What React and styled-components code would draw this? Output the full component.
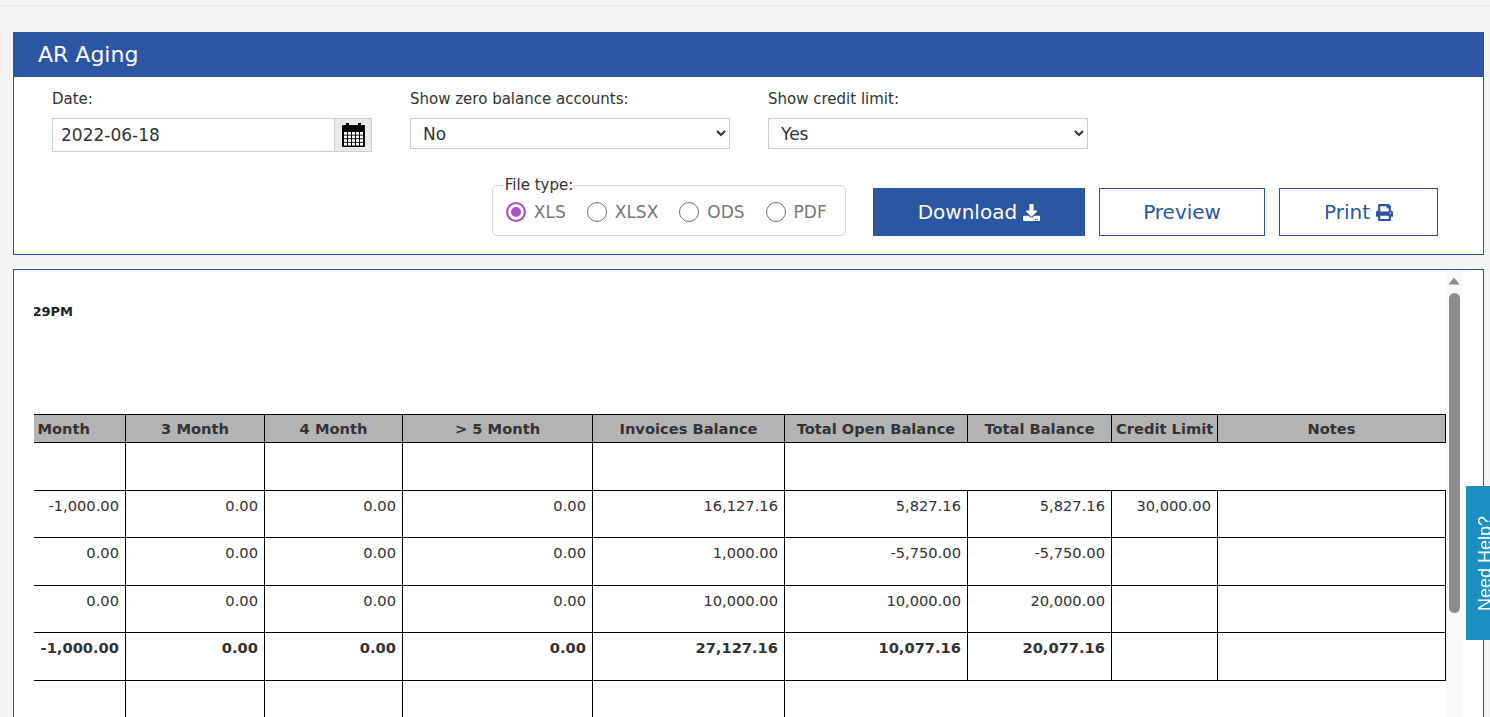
import React, { useLayoutEffect, useRef } from 'react';
import styled, { createGlobalStyle } from 'styled-components';
import { FaDownload, FaPrint } from 'react-icons/fa';

const GlobalStyle = createGlobalStyle`
  html, body { margin: 0; padding: 0; overflow: hidden; }
  body {
    background: #f4f4f4;
    font-family: "DejaVu Sans", Verdana, sans-serif;
    color: #333;
  }
  * { box-sizing: border-box; }
`;

const TopStrip = styled.div`
  height: 7px;
  border-bottom: 2px solid #e8ecf1;
`;

const Main = styled.main`
  padding: 25px 6px 0 13px;
`;

const CardTitle = styled.h1`
  margin: 0;
  height: 45px;
  line-height: 45px;
  padding-left: 25px;
  background: #2b56a3;
  color: #fff;
  font-size: 22px;
  font-weight: normal;
`;

const CardBody = styled.div`
  background: #fff;
  border: 1px solid #2b56a3;
  border-top: 0;
  padding: 13px 45px 18px 38px;
`;

const FieldRow = styled.div`
  display: grid;
  grid-template-columns: repeat(3, 320px);
  column-gap: 38px;
  align-items: start;
`;

const Field = styled.div`
  display: flex;
  flex-direction: column;
`;

const Label = styled.label`
  font-size: 15px;
  line-height: 18px;
  margin-bottom: 10px;
  color: #333;
`;

const DateGroup = styled.div`
  display: flex;
  height: 34px;
`;

const DateInput = styled.input`
  flex: 1;
  min-width: 0;
  height: 100%;
  border: 1px solid #c8cdd7;
  border-right: 0;
  padding: 0 8px;
  font-family: inherit;
  font-size: 17px;
  color: #333;
  outline: none;
`;

const Addon = styled.span`
  width: 38px;
  display: flex;
  align-items: center;
  justify-content: center;
  background: #e9e9e9;
  border: 1px solid #c8cdd7;
`;

const Select = styled.select`
  width: 100%;
  height: 31px;
  border: 1px solid #c8cdd7;
  border-radius: 0;
  background: #fff;
  padding: 0 8px;
  font-family: inherit;
  font-size: 17px;
  color: #333;
`;

const ActionRow = styled.div`
  display: flex;
  justify-content: flex-end;
  align-items: flex-end;
  gap: 14px;
  margin-top: 24px;
`;

const FileType = styled.fieldset`
  margin: 0 13px 0 0;
  padding: 4px 18px 9px 13px;
  border: 1px solid #d6d6d6;
  border-radius: 5px;
  min-width: 0;
`;

const Legend = styled.legend`
  margin-left: -2px;
  padding: 0 1px;
  font-size: 15px;
  line-height: 18px;
  color: #333;
`;

const RadioGroup = styled.div`
  display: flex;
  align-items: center;
  height: 28px;
  gap: 21px;
`;

const RadioLabel = styled.label`
  display: flex;
  align-items: center;
  gap: 8px;
  font-size: 17px;
  color: #787878;
`;

const Radio = styled.input`
  appearance: none;
  width: 20px;
  height: 20px;
  margin: 0;
  border-radius: 50%;
  border: 1.5px solid #707070;
  background: #fff;

  &:checked {
    border: 2px solid #a950c6;
    background: #a950c6;
    box-shadow: inset 0 0 0 3px #fff;
  }
`;

const ActionButton = styled.button`
  height: 48px;
  padding: 0 ${(p) => p.$pad || 44}px;
  display: inline-flex;
  align-items: center;
  justify-content: center;
  gap: 6px;
  border: 1px solid #2b56a3;
  border-radius: 0;
  background: ${(p) => (p.$primary ? '#2b56a3' : '#fff')};
  color: ${(p) => (p.$primary ? '#fff' : '#2b56a3')};
  font-family: inherit;
  font-size: 20px;
  cursor: pointer;

  svg { width: 17px; height: 17px; }
`;

const ReportPanel = styled.section`
  margin-top: 14px;
  height: 480px;
  display: flex;
  background: #fff;
  border: 1px solid #2b56a3;
  padding: 0 21px 0 20px;
`;

const Viewport = styled.div`
  flex: 1;
  min-width: 0;
  height: 100%;
  overflow: hidden;
  background: #fff;
`;

const ScrollRail = styled.div`
  width: 16px;
  height: 100%;
  background: #f8f8f8;
  display: flex;
  flex-direction: column;
  align-items: center;
`;

const RailArrow = styled.div`
  height: 15px;
  display: flex;
  align-items: flex-end;
  justify-content: center;
`;

const RailThumb = styled.div`
  margin-top: 8px;
  width: 11px;
  height: 320px;
  border-radius: 6px;
  background: #8c8c8c;
`;

const Report = styled.div`
  width: max-content;
  padding-bottom: 120px;
`;

const MetaLine = styled.div`
  width: 607px;
  padding-top: 34px;
  text-align: right;
  font-size: 13px;
  line-height: 16px;
  font-weight: bold;
  color: #222;
`;

const AgingTable = styled.table`
  margin-top: 94px;
  border-collapse: collapse;
  table-layout: fixed;
  font-size: 11pt;
  color: #333;
`;

const Th = styled.th`
  height: 28px;
  padding: 0 4px;
  background: #b3b3b3;
  border: 1px solid #000;
  font-weight: bold;
  text-align: center;
  white-space: nowrap;
  color: #333;
`;

const Row = styled.tr`
  height: 47.6px;
`;

const Td = styled.td`
  padding: 6px 6px 0;
  border: 1px solid #000;
  vertical-align: top;
  text-align: ${(p) => (p.$left ? 'left' : 'right')};
  font-weight: ${(p) => (p.$bold ? 'bold' : 'normal')};
  white-space: nowrap;
  overflow: hidden;
`;

const OpenTd = styled.td`
  border: none;
`;

const HelpTab = styled.div`
  position: fixed;
  right: -16px;
  top: 486px;
  width: 40px;
  height: 154px;
  background: #1b8ec2;
  border-radius: 6px 0 0 6px;
  display: flex;
  align-items: center;
  justify-content: center;
  writing-mode: vertical-rl;
  transform: rotate(180deg);
  color: #fff;
  font-family: "Liberation Sans", Arial, sans-serif;
  font-size: 18px;
`;

const columns = [
  { title: 'Customer', width: 240 },
  { title: 'Current', width: 140 },
  { title: '1 Month', width: 140 },
  { title: '2 Month', width: 139 },
  { title: '3 Month', width: 139 },
  { title: '4 Month', width: 138 },
  { title: '> 5 Month', width: 190 },
  { title: 'Invoices Balance', width: 192 },
  { title: 'Total Open Balance', width: 183 },
  { title: 'Total Balance', width: 144 },
  { title: 'Credit Limit', width: 106 },
  { title: 'Notes', width: 228 },
];

const rows = [
  ['Brightline Supply Co.', '2,500.00', '4,327.16', '-1,000.00', '0.00', '0.00', '0.00', '16,127.16', '5,827.16', '5,827.16', '30,000.00', ''],
  ['Harbor View Traders', '-5,750.00', '0.00', '0.00', '0.00', '0.00', '0.00', '1,000.00', '-5,750.00', '-5,750.00', '', ''],
  ['Northwind Retail', '10,000.00', '0.00', '0.00', '0.00', '0.00', '0.00', '10,000.00', '10,000.00', '20,000.00', '', ''],
];

const totals = ['Total', '6,750.00', '4,327.16', '-1,000.00', '0.00', '0.00', '0.00', '27,127.16', '10,077.16', '20,077.16', '', ''];

const CalendarIcon = () => (
  <svg width="23" height="24" viewBox="0 0 23 24">
    <rect x="4" y="0" width="3" height="4" fill="#000" />
    <rect x="16" y="0" width="3" height="4" fill="#000" />
    <rect x="0" y="2" width="23" height="22" rx="1" fill="#000" />
    {[0, 1, 2, 3].map((r) =>
      [0, 1, 2, 3, 4].map((c) => (
        <rect key={`${r}-${c}`} x={2 + c * 4} y={9 + r * 3.6} width="3" height="2.7" fill="#fff" />
      ))
    )}
  </svg>
);

const BlankRow = () => (
  <Row>
    {columns.slice(0, 8).map((c) => (
      <Td key={c.title} />
    ))}
    <OpenTd colSpan={4} />
  </Row>
);

export default function App() {
  const viewRef = useRef(null);

  // report is shown scrolled to its right end
  useLayoutEffect(() => {
    const el = viewRef.current;
    if (el) el.scrollLeft = el.scrollWidth;
  }, []);

  const tableWidth = columns.reduce((s, c) => s + c.width, 0);

  return (
    <>
      <GlobalStyle />
      <TopStrip />
      <Main>
        <section>
          <CardTitle>AR Aging</CardTitle>
          <CardBody>
            <FieldRow>
              <Field>
                <Label>Date:</Label>
                <DateGroup>
                  <DateInput defaultValue="2022-06-18" />
                  <Addon>
                    <CalendarIcon />
                  </Addon>
                </DateGroup>
              </Field>
              <Field>
                <Label>Show zero balance accounts:</Label>
                <Select defaultValue="no">
                  <option value="no">No</option>
                  <option value="yes">Yes</option>
                </Select>
              </Field>
              <Field>
                <Label>Show credit limit:</Label>
                <Select defaultValue="yes">
                  <option value="yes">Yes</option>
                  <option value="no">No</option>
                </Select>
              </Field>
            </FieldRow>
            <ActionRow>
              <FileType>
                <Legend>File type:</Legend>
                <RadioGroup>
                  {['XLS', 'XLSX', 'ODS', 'PDF'].map((t) => (
                    <RadioLabel key={t}>
                      <Radio type="radio" name="filetype" defaultChecked={t === 'XLS'} />
                      {t}
                    </RadioLabel>
                  ))}
                </RadioGroup>
              </FileType>
              <ActionButton $primary>
                Download <FaDownload />
              </ActionButton>
              <ActionButton $pad={43}>Preview</ActionButton>
              <ActionButton>
                Print <FaPrint />
              </ActionButton>
            </ActionRow>
          </CardBody>
        </section>

        <ReportPanel>
          <Viewport ref={viewRef}>
            <Report>
              <MetaLine>Printed: 2022-06-18 02:29PM</MetaLine>
              <AgingTable style={{ width: tableWidth }}>
                <colgroup>
                  {columns.map((c) => (
                    <col key={c.title} style={{ width: c.width }} />
                  ))}
                </colgroup>
                <thead>
                  <tr>
                    {columns.map((c) => (
                      <Th key={c.title}>{c.title}</Th>
                    ))}
                  </tr>
                </thead>
                <tbody>
                  <BlankRow />
                  {rows.map((r, i) => (
                    <Row key={i}>
                      {r.map((v, j) => (
                        <Td key={j} $left={j === 0}>{v}</Td>
                      ))}
                    </Row>
                  ))}
                  <Row>
                    {totals.map((v, j) => (
                      <Td key={j} $left={j === 0} $bold>{v}</Td>
                    ))}
                  </Row>
                  <BlankRow />
                  <BlankRow />
                </tbody>
              </AgingTable>
            </Report>
          </Viewport>
          <ScrollRail>
            <RailArrow>
              <svg width="12" height="8" viewBox="0 0 12 8">
                <path d="M6 0.5 L11.5 7.5 L0.5 7.5 Z" fill="#8c8c8c" />
              </svg>
            </RailArrow>
            <RailThumb />
          </ScrollRail>
        </ReportPanel>
      </Main>
      <HelpTab>Need Help?</HelpTab>
    </>
  );
}
